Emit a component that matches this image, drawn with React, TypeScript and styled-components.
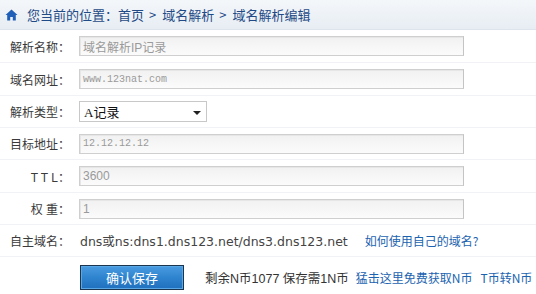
import React from "react";
import styled, { createGlobalStyle } from "styled-components";

const Global = createGlobalStyle`
  html, body { margin: 0; padding: 0; background: #ffffff; }
  body { font-family: "Liberation Sans", "Noto Sans CJK SC", sans-serif; font-size: 12px; color: #333; }
`;

const Page = styled.div`
  width: 536px;
  height: 294px;
  overflow: hidden;
  background: #fff;
`;

const Crumbs = styled.div`
  height: 29px;
  display: flex;
  align-items: center;
  padding-left: 5px;
  background: linear-gradient(to bottom, #f4f7fa, #e7edf3);
  border-bottom: 1px solid #dde4ec;
  font-family: "Noto Sans CJK SC", sans-serif;
  font-size: 13px;
  color: #1f4a86;
`;

const CrumbText = styled.span`
  white-space: pre;
  line-height: 1;
  margin-left: 9px;
`;

const Sep = styled.span`
  margin: 0 6px 0 5px;
`;

const Row = styled.div<{ $h: number }>`
  height: ${(p) => p.$h - 1}px;
  display: flex;
  align-items: center;
  border-bottom: 1px solid #f0f2f5;
`;

const Label = styled.div`
  width: 60px;
  margin-left: 10px;
  margin-right: 9px;
  text-align: right;
  white-space: pre;
  font-family: "Liberation Sans", "Noto Sans CJK SC", sans-serif;
  font-size: 12px;
  color: #3a3a3a;
`;

const Field = styled.div<{ $mono?: boolean }>`
  box-sizing: border-box;
  width: 385px;
  height: 20px;
  border: 1px solid #cfcfcf;
  border-right-color: #c4c4c4;
  background: linear-gradient(to bottom, #f1f1f1, #fbfbfb);
  box-shadow: inset 1px 1px 0 #e6e6e6;
  display: flex;
  align-items: center;
  padding-left: 3px;
  color: #9a9a9a;
  font-family: ${(p) =>
    p.$mono ? `"Liberation Mono", monospace` : `"Liberation Sans", "Noto Sans CJK SC", sans-serif`};
  font-size: ${(p) => (p.$mono ? "10px" : "12px")};
`;

const Select = styled.div`
  box-sizing: border-box;
  width: 128px;
  height: 21px;
  border: 1px solid #c8c8c8;
  background: #fff;
  display: flex;
  align-items: center;
  justify-content: space-between;
  padding: 0 5px 0 4px;
  font-family: "Liberation Serif", "Noto Sans CJK SC", serif;
  font-size: 13px;
  color: #111;
`;

const Arrow = styled.span`
  width: 0;
  height: 0;
  border-left: 4px solid transparent;
  border-right: 4px solid transparent;
  border-top: 4px solid #222;
  margin-top: 2px;
`;

const DnsText = styled.span`
  font-family: "DejaVu Sans", "Noto Sans CJK SC", sans-serif;
  font-size: 12.5px;
  color: #444;
  margin-left: 1px;
  margin-right: 17px;
`;

const Link = styled.a`
  color: #1b63b0;
  text-decoration: none;
  font-family: "Noto Sans CJK SC", sans-serif;
  font-size: 12px;
`;

const ActionRow = styled.div`
  display: flex;
  align-items: center;
  padding-left: 80px;
  padding-top: 8px;
`;

const SaveButton = styled.button`
  box-sizing: border-box;
  width: 104px;
  height: 25px;
  border: 1px solid #1b3550;
  background: linear-gradient(to bottom, #4a9ce0 0%, #2f84cf 50%, #1f6fbd 100%);
  box-shadow: inset 0 0 0 1px #5aa7e6;
  color: #fff;
  font-family: "Noto Sans CJK SC", sans-serif;
  font-size: 13px;
  padding: 0;
  margin-right: 21px;
`;

const Info = styled.span`
  font-family: "Liberation Sans", "Noto Sans CJK SC", sans-serif;
  font-size: 12.5px;
  color: #333;
  margin-right: 7px;
`;

const InfoLink = styled(Link)`
  margin-right: 8px;
`;

const House = () => (
  <svg width="13" height="12" viewBox="0 0 13 12">
    <path d="M6.5 0.5 L0.5 6 L2.2 6 L2.2 11.5 L5.2 11.5 L5.2 8 L7.8 8 L7.8 11.5 L10.8 11.5 L10.8 6 L12.5 6 Z" fill="#1f5fb8" />
  </svg>
);

export default function App() {
  return (
    <Page>
      <Global />
      <Crumbs>
        <House />
        <CrumbText>
          您当前的位置：首页<Sep>&gt;</Sep>域名解析<Sep>&gt;</Sep>域名解析编辑
        </CrumbText>
      </Crumbs>
      <Row $h={33}>
        <Label>解析名称：</Label>
        <Field>域名解析IP记录</Field>
      </Row>
      <Row $h={33}>
        <Label>域名网址：</Label>
        <Field $mono>www.123nat.com</Field>
      </Row>
      <Row $h={32}>
        <Label>解析类型：</Label>
        <Select>
          <span>A记录</span>
          <Arrow />
        </Select>
      </Row>
      <Row $h={32}>
        <Label>目标地址：</Label>
        <Field $mono>12.12.12.12</Field>
      </Row>
      <Row $h={33}>
        <Label>T T L：</Label>
        <Field>3600</Field>
      </Row>
      <Row $h={32}>
        <Label>权 重：</Label>
        <Field>1</Field>
      </Row>
      <Row $h={32}>
        <Label>自主域名：</Label>
        <DnsText>dns或ns:dns1.dns123.net/dns3.dns123.net</DnsText>
        <Link>如何使用自己的域名?</Link>
      </Row>
      <ActionRow>
        <SaveButton>确认保存</SaveButton>
        <Info>剩余N币1077 保存需1N币</Info>
        <InfoLink>猛击这里免费获取N币</InfoLink>
        <Link>T币转N币</Link>
      </ActionRow>
    </Page>
  );
}
